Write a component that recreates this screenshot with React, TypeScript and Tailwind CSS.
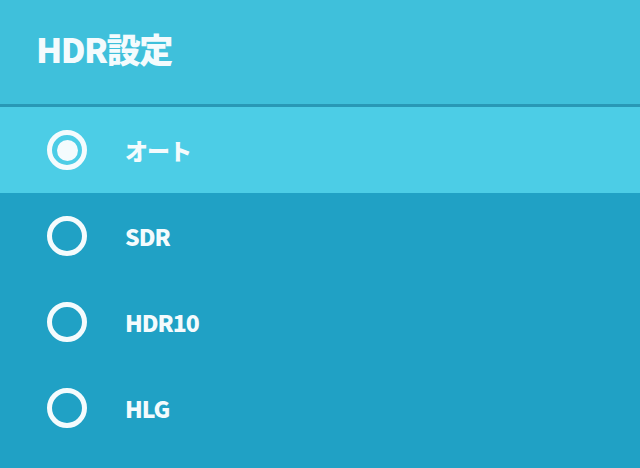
const options = ['オート', 'SDR', 'HDR10', 'HLG']

function Radio({ checked }: { checked: boolean }) {
  return (
    <div className="flex h-[40px] w-[40px] items-center justify-center rounded-full border-[5px] border-[#f4fbfd]">
      {checked && <div className="h-[21px] w-[21px] rounded-full bg-[#f4fbfd]" />}
    </div>
  )
}

export default function App() {
  const selected = 0
  return (
    <div
      className="flex h-[468px] w-[640px] flex-col overflow-hidden bg-[#20a1c5] text-[#f4fbfd]"
      style={{ fontFamily: '"Noto Sans CJK JP", "Noto Sans", sans-serif' }}
    >
      <div className="flex h-[104px] items-center bg-[#3fc0db] pl-[36px] pb-[8px]">
        <h1 className="text-[34px] font-black tracking-[-1.5px]">HDR設定</h1>
      </div>
      <div className="h-[3px] bg-[#2898b6]" />
      {options.map((label, i) => (
        <div
          key={label}
          className={`flex h-[86px] shrink-0 items-center pl-[47px] ${i === selected ? 'bg-[#4ccde6]' : ''}`}
        >
          <Radio checked={i === selected} />
          <span className="ml-[38px] text-[23px] font-black tracking-[-1px]">{label}</span>
        </div>
      ))}
    </div>
  )
}
